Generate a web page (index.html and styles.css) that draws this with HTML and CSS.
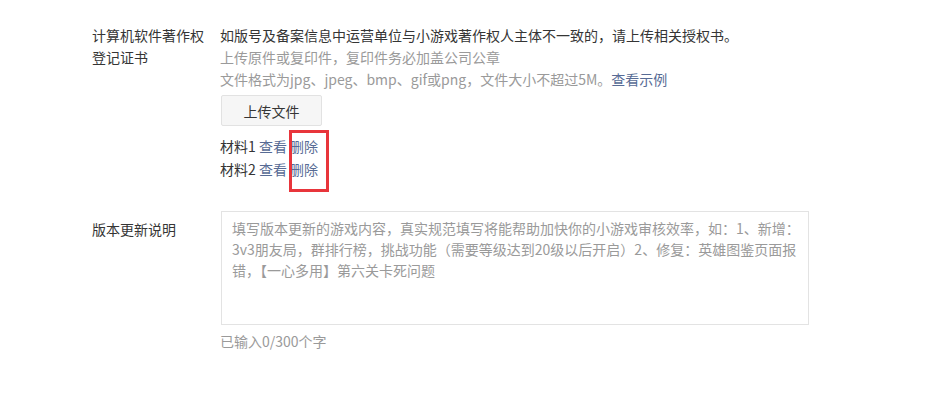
FILE: index.html
```html
<!DOCTYPE html>
<html lang="zh-CN">
<head>
<meta charset="utf-8">
<title>表单</title>
<link rel="stylesheet" href="styles.css">
</head>
<body>
<div class="form">
  <div class="row row-cert">
    <div class="label">计算机软件著作权登记证书</div>
    <div class="field">
      <p class="line">如版号及备案信息中运营单位与小游戏著作权人主体不一致的，请上传相关授权书。</p>
      <p class="line tip">上传原件或复印件，复印件务必加盖公司公章</p>
      <p class="line tip">文件格式为jpg、jpeg、bmp、gif或png，文件大小不超过5M。<a class="link" href="#">查看示例</a></p>
      <button class="btn" type="button">上传文件</button>
      <ul class="files">
        <li>材料1 <a class="link" href="#">查看</a> <a class="link" href="#">删除</a></li>
        <li>材料2 <a class="link" href="#">查看</a> <a class="link" href="#">删除</a></li>
      </ul>
      <div class="highlight"></div>
    </div>
  </div>
  <div class="row row-desc">
    <div class="label">版本更新说明</div>
    <div class="field">
      <textarea class="textarea" placeholder="填写版本更新的游戏内容，真实规范填写将能帮助加快你的小游戏审核效率，如：1、新增：3v3朋友局，群排行榜，挑战功能（需要等级达到20级以后开启）2、修复：英雄图鉴页面报错，【一心多用】第六关卡死问题"></textarea>
      <p class="counter">已输入0/300个字</p>
    </div>
  </div>
</div>
</body>
</html>
```

FILE: styles.css
```css
html, body {
  margin: 0;
  padding: 0;
  background: #fff;
}
body {
  font-family: "Noto Sans CJK SC", "Noto Sans", sans-serif;
  font-size: 14px;
  color: #353535;
}
.form {
  padding: 24px 0 0 92px;
}
.row {
  display: flex;
  line-height: 22px;
}
.label {
  width: 116px;
  margin-right: 12px;
  flex: none;
  color: #353535;
}
.field {
  position: relative;
  flex: none;
}
.line {
  margin: 0;
  white-space: nowrap;
}
.tip {
  color: #9a9a9a;
}
.link {
  color: #576b95;
  text-decoration: none;
}
.btn {
  display: block;
  margin: 5px 0 0 1px;
  width: 101px;
  height: 31px;
  padding: 0;
  border: 1px solid #e2e2e2;
  border-radius: 2px;
  background: #f6f6f6;
  font-family: inherit;
  font-size: 14px;
  color: #353535;
}
.files {
  list-style: none;
  margin: 9px 0 0;
  padding: 0;
  line-height: 23px;
}
.highlight {
  position: absolute;
  left: 69px;
  top: 106px;
  width: 34px;
  height: 56px;
  border: 3px solid #e8353b;
}
.row-desc {
  margin-top: 30px;
}
.row-desc .label {
  padding-top: 7px;
}
.textarea {
  display: block;
  box-sizing: border-box;
  margin-left: 1px;
  width: 588px;
  height: 114px;
  padding: 6px 4px 6px 10px;
  border: 1px solid #e3e3e3;
  border-radius: 0;
  resize: none;
  font-family: inherit;
  font-size: 14px;
  line-height: 21px;
  color: #353535;
  outline: none;
}
.textarea::placeholder {
  color: #9a9a9a;
  opacity: 1;
}
.counter {
  margin: 5px 0 0;
  color: #9a9a9a;
}
```
